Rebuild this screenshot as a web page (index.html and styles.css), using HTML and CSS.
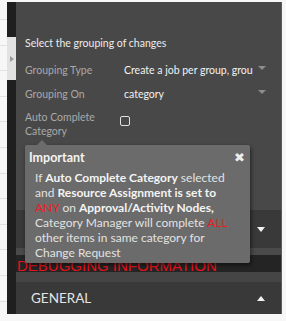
FILE: index.html
```html
<!DOCTYPE html>
<html lang="en">
<head>
  <meta charset="UTF-8">
  <meta name="viewport" content="width=device-width, initial-scale=1.0">
  <title>Change Grouping</title>
  <link rel="stylesheet" href="styles.css">
</head>
<body>
  <div class="layout">
    <div class="page-edge"></div>

    <!-- Collapsed side rail with the expand tab -->
    <div class="rail">
      <div class="rail-tab"><span class="tab-arrow"></span></div>
    </div>

    <div class="panel">
      <div class="settings">
        <p class="intro">Select the grouping of changes</p>
        <div class="field">
          <span class="field-label">Grouping Type</span>
          <div class="field-value">
            <span class="value-text">Create a job per group, grouped by category</span>
            <span class="select-arrow"></span>
          </div>
        </div>
        <div class="field">
          <span class="field-label">Grouping On</span>
          <div class="field-value">
            <span class="value-text">category</span>
            <span class="select-arrow"></span>
          </div>
        </div>
        <div class="field field-check">
          <span class="field-label">Auto Complete Category</span>
          <div class="field-value">
            <span class="checkbox"></span>
          </div>
        </div>
      </div>

      <!-- Collapsible sections at the bottom of the panel -->
      <div class="sections">
        <div class="section-head">
          <span class="section-title"></span>
          <span class="arrow-down"></span>
        </div>
        <div class="section-gap"></div>
        <div class="debug-band">
          <span class="debug-text">Debugging Information</span>
        </div>
        <div class="section-gap section-gap-wide"></div>
        <div class="section-head section-head-general">
          <span class="section-title">GENERAL</span>
          <span class="arrow-up"></span>
        </div>
      </div>

      <!-- Tooltip shown for Auto Complete Category -->
      <div class="tooltip">
        <div class="tooltip-head">
          <span class="tooltip-title">Important</span>
          <span class="tooltip-close">&#10006;</span>
        </div>
        <p class="tooltip-body">
          If <strong>Auto Complete Category</strong> selected and <strong>Resource Assignment is set to</strong>
          <span class="warn">ANY</span> on <strong>Approval/Activity Nodes,</strong> Category Manager will complete
          <span class="warn">ALL</span> other items in same category for Change Request
        </p>
      </div>
    </div>

    <div class="page-edge-right"></div>
  </div>
</body>
</html>
```

FILE: styles.css
```css
/* Page behind the panel */
body {
  margin: 0;
  background-color: #f7f7f7;
  font-family: Lato, "Open Sans", sans-serif;
  color: #e8e8e8;
}

.layout {
  display: flex;
  height: 321px;
  padding-top: 2px;
  box-sizing: border-box;
}

/* Faint table rows of the page underneath */
.page-edge {
  width: 7px;
  height: 321px;
  margin-top: -2px;
  background: repeating-linear-gradient(
    to bottom,
    transparent 0,
    transparent 19px,
    #e2e2e2 19px,
    #e2e2e2 20px,
    transparent 20px,
    transparent 25.6px
  );
}

.page-edge-right {
  width: 4px;
}

/* Dark rail */
.rail {
  width: 9px;
  height: 312px;
  background-color: #1f1f1f;
  padding-top: 35px;
  box-sizing: border-box;
}

.rail-tab {
  height: 43px;
  background-color: #e2e2e2;
  display: flex;
  align-items: center;
  padding-left: 3px;
}

.tab-arrow {
  width: 0;
  height: 0;
  border-top: 3px solid transparent;
  border-bottom: 3px solid transparent;
  border-left: 4px solid #9a9a9a;
}

/* Main panel */
.panel {
  position: relative;
  flex: 1;
  height: 312px;
  display: flex;
  flex-direction: column;
  background-color: #484848;
  border-right: 1px solid #5c5c5c;
}

.settings {
  padding: 34px 15px 0 9px;
}

.intro {
  margin: 0 0 8px;
  font-size: 10.5px;
  line-height: 14px;
  color: #ececec;
}

.field {
  display: grid;
  grid-template-columns: 99px 1fr;
  align-items: center;
  height: 24px;
  font-size: 10.5px;
}

.field-label {
  color: #a9a9a9;
}

.field-value {
  display: flex;
  align-items: center;
  min-width: 0;
}

.value-text {
  flex: 1;
  overflow: hidden;
  white-space: nowrap;
  color: #f2f2f2;
}

.select-arrow {
  width: 0;
  height: 0;
  margin: 0 0 4px 5px;
  border-left: 4px solid transparent;
  border-right: 4px solid transparent;
  border-top: 4px solid #8c8c8c;
}

.field-check {
  height: auto;
  margin-top: 4px;
  align-items: start;
}

.field-check .field-label {
  line-height: 14px;
}

.checkbox {
  width: 8px;
  height: 8px;
  margin: 6px 0 0 -4px;
  border: 1.5px solid #e0e0e0;
  border-radius: 2px;
}

/* Collapsible sections */
.sections {
  margin-top: auto;
}

.section-head {
  height: 38px;
  display: flex;
  align-items: center;
  justify-content: space-between;
  padding: 0 16px 0 15px;
  background-color: #393939;
}

.section-head-general {
  height: 32px;
}

.section-title {
  font-size: 13.5px;
  color: #e4e4e4;
}

.arrow-down {
  width: 0;
  height: 0;
  border-left: 4.5px solid transparent;
  border-right: 4.5px solid transparent;
  border-top: 5px solid #f2f2f2;
}

.arrow-up {
  width: 0;
  height: 0;
  border-left: 4.5px solid transparent;
  border-right: 4.5px solid transparent;
  border-bottom: 5px solid #f2f2f2;
}

.section-gap {
  height: 7px;
  background-color: #4a4a4a;
}

.section-gap-wide {
  height: 10px;
  background-color: #454545;
}

/* Title band that is cut off by the next section */
.debug-band {
  height: 17px;
  overflow: hidden;
  background-color: #242424;
}

.debug-text {
  display: block;
  padding: 2px 0 0 1px;
  font-family: "Liberation Sans", Arial, sans-serif;
  font-size: 15px;
  line-height: 18px;
  text-transform: uppercase;
  color: #e8121b;
}

/* Tooltip */
.tooltip {
  position: absolute;
  left: 9px;
  top: 143px;
  width: 225px;
  height: 118px;
  box-sizing: border-box;
  padding: 4px 5px 0 4px;
  background-color: #6b6b6b;
  border-radius: 2px;
  box-shadow: 1px 2px 4px rgba(0, 0, 0, 0.55);
}

.tooltip::before {
  content: "";
  position: absolute;
  left: 12px;
  top: -5px;
  border-left: 5px solid transparent;
  border-right: 5px solid transparent;
  border-bottom: 5px solid #6b6b6b;
}

.tooltip-head {
  display: flex;
  justify-content: space-between;
  align-items: center;
  height: 16px;
}

.tooltip-title {
  font-size: 12.5px;
  font-weight: bold;
  color: #f4f4f4;
}

.tooltip-close {
  font-family: "DejaVu Sans", sans-serif;
  font-size: 13px;
  color: #eeeeee;
}

.tooltip-body {
  margin: 5px 12px 0 6px;
  font-size: 12px;
  line-height: 15px;
  color: #e2e2e2;
}

.tooltip-body strong {
  color: #f4f4f4;
}

.warn {
  color: #ef1c24;
}
```
